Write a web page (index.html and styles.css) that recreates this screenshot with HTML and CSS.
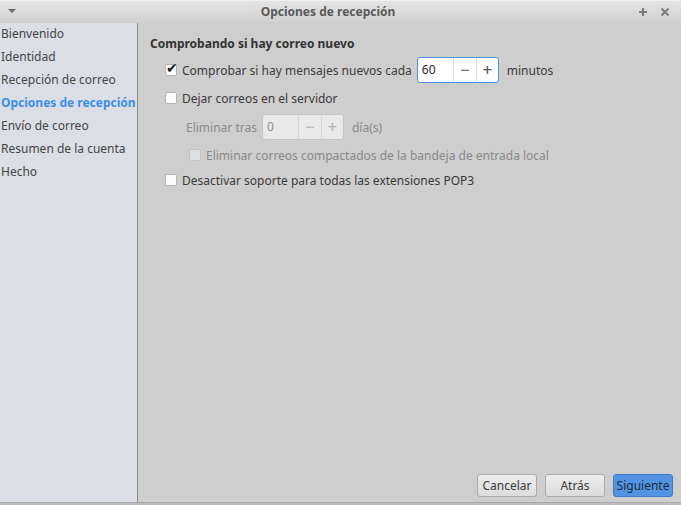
FILE: index.html
```html
<!DOCTYPE html>
<html lang="es">
<head>
<meta charset="utf-8">
<title>Opciones de recepción</title>
<link rel="stylesheet" href="styles.css">
</head>
<body>
<div class="window">
  <div class="titlebar">
    <svg class="menu-arrow" width="10" height="6" viewBox="0 0 10 6"><path d="M1 1h8L5 5z" fill="#6a6a6a"/></svg>
    <div class="title">Opciones de recepción</div>
    <div class="tb-buttons">
      <svg width="10" height="10" viewBox="0 0 10 10"><path d="M5 1v8M1 5h8" stroke="#7a7a7a" stroke-width="2"/></svg>
      <svg width="10" height="10" viewBox="0 0 10 10"><path d="M1.5 1.5l7 7M8.5 1.5l-7 7" stroke="#7a7a7a" stroke-width="2"/></svg>
    </div>
  </div>
  <div class="body">
    <nav class="sidebar">
      <div class="nav-item">Bienvenido</div>
      <div class="nav-item">Identidad</div>
      <div class="nav-item">Recepción de correo</div>
      <div class="nav-item active">Opciones de recepción</div>
      <div class="nav-item">Envío de correo</div>
      <div class="nav-item">Resumen de la cuenta</div>
      <div class="nav-item">Hecho</div>
    </nav>
    <main class="main">
      <div class="content">
        <div class="heading">Comprobando si hay correo nuevo</div>
        <div class="row row-spin indent1">
          <span class="check checked"><span class="tick">✔</span></span>
          <span class="label">Comprobar si hay mensajes nuevos cada</span>
          <div class="spin focused">
            <span class="spin-value">60</span>
            <span class="spin-btn">−</span>
            <span class="spin-btn">+</span>
          </div>
          <span class="label">minutos</span>
        </div>
        <div class="row row-check indent1">
          <span class="check"></span>
          <span class="label">Dejar correos en el servidor</span>
        </div>
        <div class="row row-spin indent2 disabled">
          <span class="label">Eliminar tras</span>
          <div class="spin">
            <span class="spin-value">0</span>
            <span class="spin-btn">−</span>
            <span class="spin-btn">+</span>
          </div>
          <span class="label">día(s)</span>
        </div>
        <div class="row row-check indent3 disabled">
          <span class="check"></span>
          <span class="label">Eliminar correos compactados de la bandeja de entrada local</span>
        </div>
        <div class="row row-check indent1">
          <span class="check"></span>
          <span class="label">Desactivar soporte para todas las extensiones POP3</span>
        </div>
      </div>
      <div class="actions">
        <button class="btn">Cancelar</button>
        <button class="btn">Atrás</button>
        <button class="btn primary">Siguiente</button>
      </div>
    </main>
  </div>
  <div class="bottom"></div>
</div>
</body>
</html>
```
FILE: styles.css
```css
* { box-sizing: border-box; }
html, body {
  margin: 0;
  padding: 0;
  width: 681px;
  height: 505px;
  overflow: hidden;
  font-family: "Noto Sans", "Open Sans", sans-serif;
  font-size: 12px;
  color: #3b3b3b;
  background: #cecece;
}
.window {
  display: flex;
  flex-direction: column;
  width: 681px;
  height: 505px;
}
.titlebar {
  height: 23px;
  flex: none;
  display: flex;
  align-items: center;
  position: relative;
  background: linear-gradient(#e4e4e4, #d0d0d0);
  border-top: 1px solid #f0f0f0;
}
.menu-arrow {
  margin-left: 7px;
  margin-top: -2px;
}
.title {
  position: absolute;
  left: 0;
  right: 0;
  text-align: center;
  font-weight: bold;
  color: #5a5a5a;
  font-size: 12px;
  padding-right: 25px;
  line-height: 22px;
}
.tb-buttons {
  margin-left: auto;
  margin-right: 11px;
  display: flex;
  gap: 12px;
}
.body {
  flex: 1;
  display: flex;
  min-height: 0;
}
.sidebar {
  width: 138px;
  flex: none;
  background: #dbdfe5;
  border-right: 1px solid #8e8e8e;
  padding-top: 1px;
}
.nav-item {
  height: 23px;
  line-height: 20px;
  padding-left: 1px;
  white-space: nowrap;
  color: #454545;
}
.nav-item.active {
  color: #3b8fe9;
  font-weight: bold;
}
.main {
  flex: 1;
  display: flex;
  flex-direction: column;
  padding: 12px 8px 5px 12px;
}
.content {
  flex: 1;
}
.heading {
  font-weight: bold;
  line-height: 18px;
  color: #333;
}
.row {
  display: flex;
  align-items: center;
  white-space: nowrap;
}
.row-spin { height: 26px; }
.row-check { height: 22px; }
.heading + .row { margin-top: 4px; }
.row + .row { margin-top: 4px; }
.row-check + .row-spin { margin-top: 5px; }
.indent1 { padding-left: 15px; }
.indent2 { padding-left: 36px; }
.indent3 { padding-left: 39px; }
.indent3 + .row { margin-top: 3px; }
.check {
  width: 12px;
  height: 12px;
  border: 1px solid #b4b4b4;
  border-radius: 2px;
  background: #fbfbfb;
  margin-right: 5px;
  position: relative;
  flex: none;
}
.tick {
  position: absolute;
  left: 0px;
  top: -5px;
  font-size: 14px;
  line-height: 16px;
  color: #1e1e1e;
}
.indent3 .check { background: #dedede; border-color: #c4c4c4; }
.label { color: #3b3b3b; }
.disabled .label { color: #8a8a8a; }
.spin {
  display: flex;
  height: 26px;
  width: 82px;
  border: 1px solid #b8b8b8;
  border-radius: 3px;
  background: #ffffff;
  margin: 0 8px 0 5px;
  overflow: hidden;
}
.spin.focused { border-color: #4f8ee0; }
.spin-value {
  flex: 1;
  padding-left: 4px;
  line-height: 24px;
  color: #2a2a2a;
  border-right: 1px solid #e0e0e0;
}
.spin-btn {
  width: 22px;
  text-align: center;
  line-height: 23px;
  font-size: 17px;
  color: #555;
}
.spin-btn + .spin-btn { border-left: 1px solid #e0e0e0; }
.disabled .spin {
  background: #e9e9e9;
  border-color: #c4c4c4;
}
.disabled .spin-value { color: #8e8e8e; border-color: #d6d6d6; }
.disabled .spin-btn { color: #b0b0b0; }
.disabled .spin-btn + .spin-btn { border-color: #d6d6d6; }
.actions {
  display: flex;
  justify-content: flex-end;
  gap: 8px;
}
.btn {
  width: 60px;
  height: 23px;
  padding: 0;
  font-family: inherit;
  font-size: 12px;
  color: #3b3b3b;
  border: 1px solid #ababab;
  border-radius: 3px;
  background: linear-gradient(#ececec, #dcdcdc);
}
.btn.primary {
  color: #1d2b3c;
  background: #5294e2;
  border-color: #3f7cc6;
}
.bottom {
  height: 3px;
  flex: none;
  background: #bdbdbd;
  border-top: 1px solid #a8a8a8;
}
```
